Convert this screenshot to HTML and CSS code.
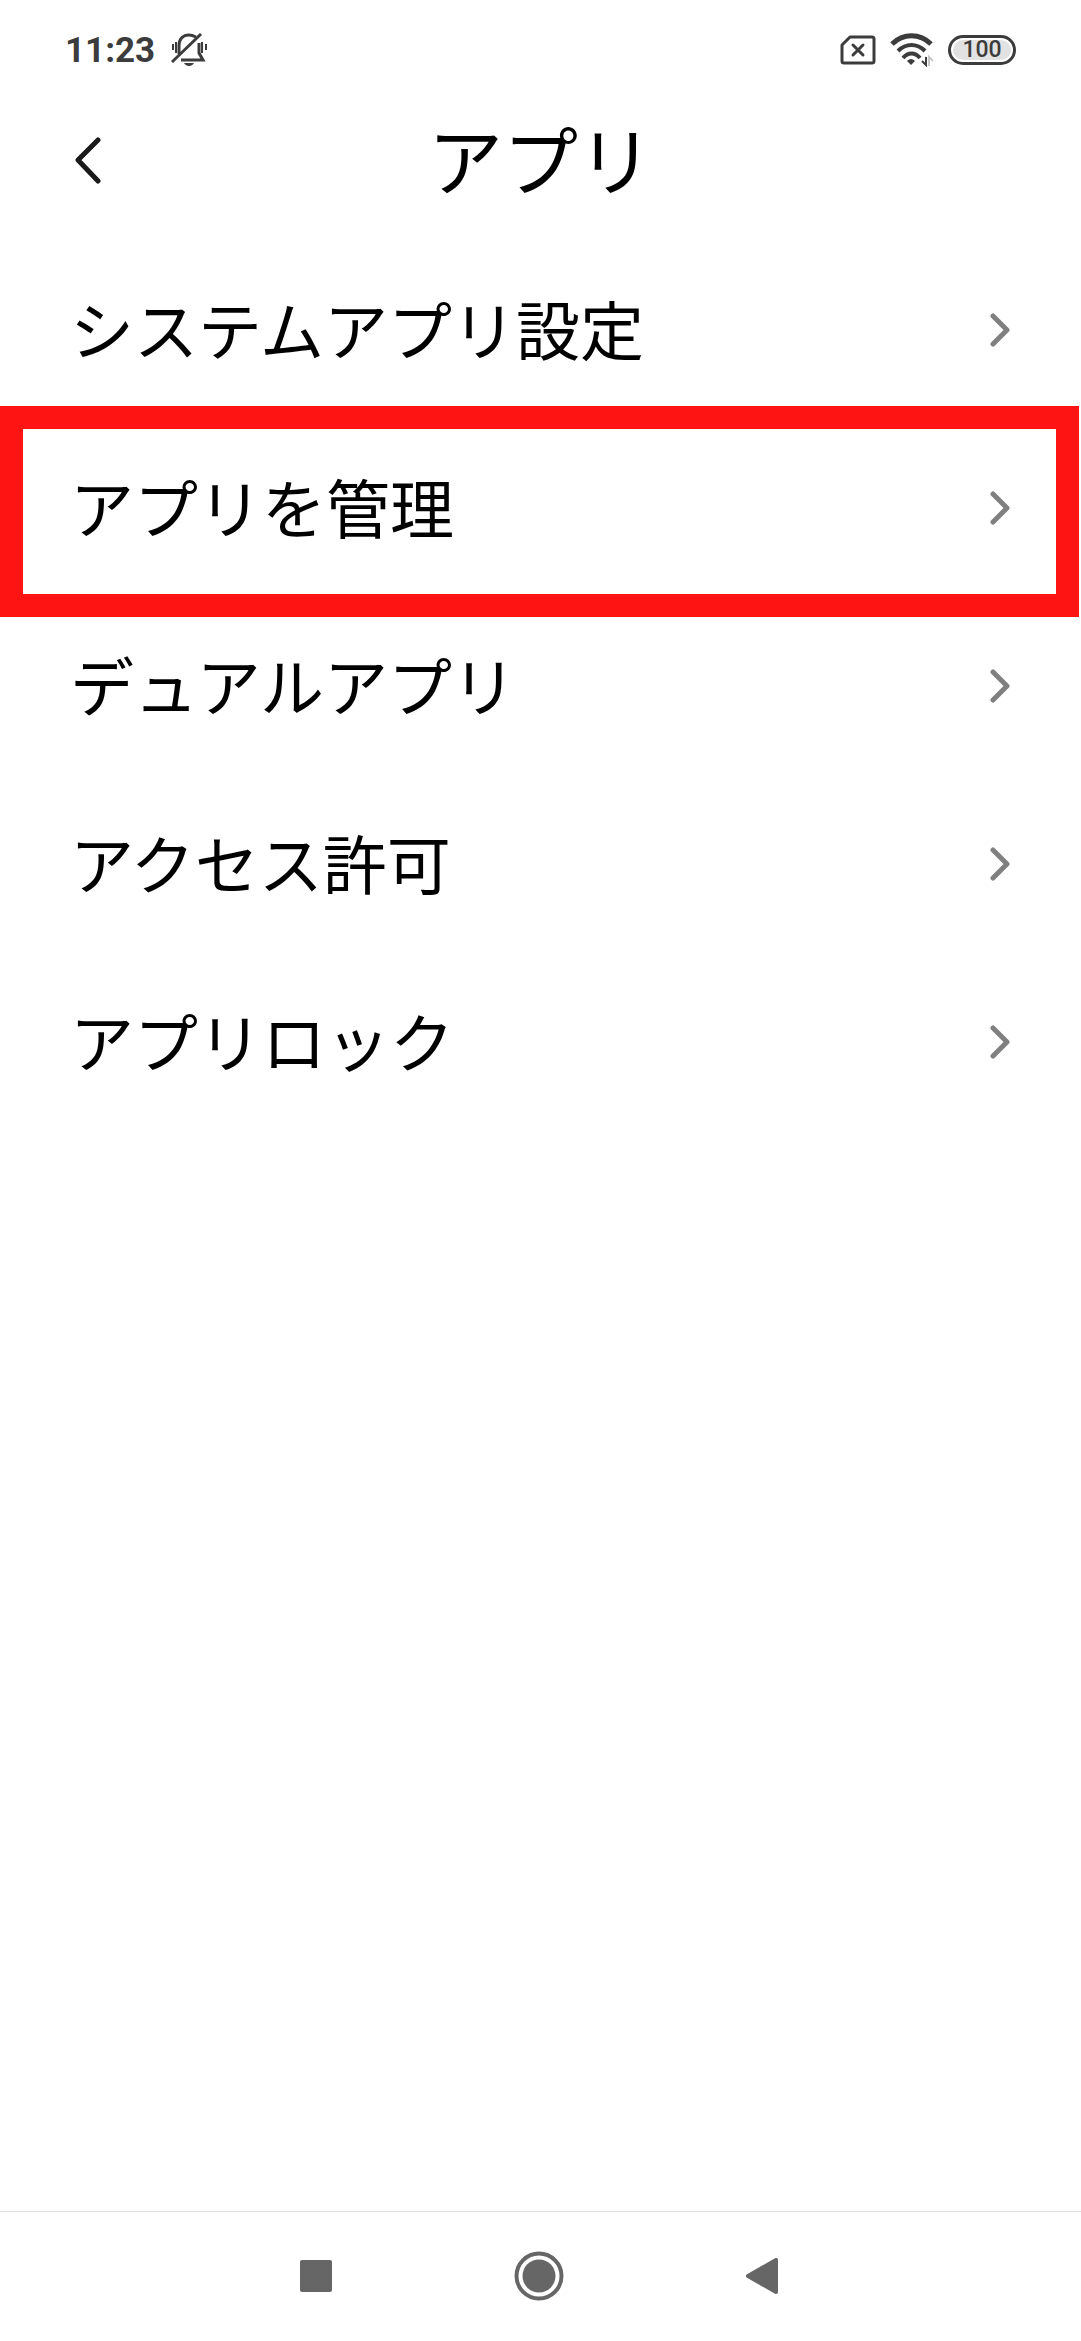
FILE: index.html
```html
<!DOCTYPE html>
<html lang="ja">

<head>
    <meta charset="utf-8">
    <meta name="viewport" content="width=device-width, initial-scale=1">
    <title>アプリ</title>
    <link rel="stylesheet" href="styles.css">
</head>

<body>

    <div class="statusbar">
        <span class="time">11:23</span>
        <svg class="bell" width="36" height="34" viewBox="0 0 36 34" fill="none" stroke="#3c3c3c" stroke-width="3">
            <path d="M8 21V13C8 6 12 2 18 2C21 2 23 3 25 4M28 10V20L32 27H10" />
            <path d="M1 29L30 1" />
            <path d="M2 11V17M5 9V20M31 9V20M35 11V17" stroke-width="2" />
            <path d="M13 30H23C21 34 15 34 13 30Z" fill="#3c3c3c" stroke="none" />
        </svg>
        <div class="status-icons">
            <svg width="36" height="30" viewBox="0 0 36 30" fill="none" stroke="#3c3c3c" stroke-width="3">
                <path d="M10 2H32Q34 2 34 4V26Q34 28 32 28H4Q2 28 2 26V10Z" stroke-linejoin="round" />
                <path d="M13 10L23 20M23 10L13 20" stroke-linecap="round" />
            </svg>
            <svg width="44" height="34" viewBox="0 0 44 34" fill="none" stroke="#3c3c3c" stroke-width="5">
                <path d="M2 11C13 0 30 0 41 11" />
                <path d="M8 18C16 10 27 10 35 18M13 25C18 19 25 19 30 25" stroke-width="4" />
                <path d="M17 28Q21 24 25 28L21 32Z" fill="#3c3c3c" stroke="none" />
                <path d="M36 24V32L32 28" stroke-width="2" />
                <path d="M39 33V24L43 28" stroke="#c8c8c8" stroke-width="2" />
            </svg>
            <span class="battery"><span>100</span></span>
        </div>
    </div>

    <header class="titlebar">
        <button class="back" type="button" aria-label="戻る">
            <svg width="28" height="48" viewBox="0 0 28 48" fill="none" stroke="#1a1a1a" stroke-width="5" stroke-linecap="round" stroke-linejoin="round">
                <path d="M24 3L4 23L24 44" />
            </svg>
        </button>
        <h1>アプリ</h1>
    </header>

    <main>
        <ul class="menu">
            <li><a href="#system"><span>システムアプリ設定</span>
                <svg class="arrow" viewBox="0 0 20 34"><path d="M3 3L17 17L3 31" /></svg></a></li>
            <li class="marked"><a href="#manage"><span>アプリを管理</span>
                <svg class="arrow" viewBox="0 0 20 34"><path d="M3 3L17 17L3 31" /></svg></a></li>
            <li><a href="#dual"><span>デュアルアプリ</span>
                <svg class="arrow" viewBox="0 0 20 34"><path d="M3 3L17 17L3 31" /></svg></a></li>
            <li><a href="#permission"><span>アクセス許可</span>
                <svg class="arrow" viewBox="0 0 20 34"><path d="M3 3L17 17L3 31" /></svg></a></li>
            <li><a href="#lock"><span>アプリロック</span>
                <svg class="arrow" viewBox="0 0 20 34"><path d="M3 3L17 17L3 31" /></svg></a></li>
        </ul>
    </main>

    <nav class="navbar">
        <button type="button" aria-label="履歴">
            <svg width="32" height="32" viewBox="0 0 32 32"><rect width="32" height="32" rx="2" fill="#666" /></svg>
        </button>
        <button type="button" aria-label="ホーム">
            <svg width="50" height="50" viewBox="0 0 50 50" fill="#666">
                <circle cx="25" cy="25" r="22.5" fill="none" stroke="#666" stroke-width="4" />
                <circle cx="25" cy="25" r="16.5" />
            </svg>
        </button>
        <button type="button" aria-label="戻る">
            <svg width="32" height="36" viewBox="0 0 32 36" fill="#666" stroke="#666" stroke-width="4" stroke-linejoin="round">
                <path d="M2 18L30 2V34Z" />
            </svg>
        </button>
    </nav>

</body>

</html>
```

FILE: styles.css
```css
* {
    box-sizing: border-box;
}

body {
    margin: 0;
    min-height: 100vh;
    display: flex;
    flex-direction: column;
    background-color: #fff;
    color: #000;
    font-family: "Noto Sans CJK JP", sans-serif;
}

svg {
    display: block;
    flex-shrink: 0;
}

button {
    margin: 0;
    padding: 0;
    border: none;
    background: none;
    display: flex;
    justify-content: center;
    align-items: center;
}

.statusbar {
    display: flex;
    align-items: center;
    height: 100px;
    padding: 0 65px;
    color: #3c3c3c;
    font-family: Roboto, sans-serif;
}

.time {
    font-size: 35px;
    font-weight: 700;
}

.bell {
    margin-left: 16px;
}

.status-icons {
    display: flex;
    align-items: center;
    gap: 14px;
    margin-left: auto;
}

.battery {
    width: 68px;
    height: 30px;
    padding: 2px;
    border: 3px solid #3c3c3c;
    border-radius: 15px;
}

.battery span {
    display: block;
    border-radius: 10px;
    background-color: #e2e2e2;
    font-size: 23px;
    font-weight: 500;
    line-height: 20px;
    text-align: center;
}

.titlebar {
    display: grid;
    grid-template-columns: 28px 1fr 28px;
    align-items: center;
    height: 122px;
    padding: 0 74px;
}

h1 {
    margin: 0;
    padding-bottom: 6px;
    font-size: 75px;
    font-weight: 400;
    line-height: 110px;
    text-align: center;
}

main {
    flex: 1;
    padding-top: 19px;
}

.menu {
    margin: 0;
    padding: 0;
    list-style: none;
}

.menu li {
    position: relative;
}

.menu a {
    display: flex;
    justify-content: space-between;
    align-items: center;
    height: 178px;
    padding: 0 71px 0 70px;
    color: #000;
    font-size: 64px;
    text-decoration: none;
}

.menu span {
    padding-bottom: 6px;
}

.arrow {
    width: 20px;
    height: 34px;
    fill: none;
    stroke: #808080;
    stroke-width: 5;
    stroke-linecap: round;
    stroke-linejoin: round;
}

/* red frame, runs over the neighbouring rows */
.marked::after {
    content: "";
    position: absolute;
    inset: -13px 2px -20px 0;
    border: 23px solid #ff1414;
    pointer-events: none;
}

.navbar {
    display: flex;
    justify-content: center;
    height: 130px;
    padding: 0 3px 2px 0;
    border-top: 1px solid #ddd;
}

.navbar button {
    width: 223px;
}
```
